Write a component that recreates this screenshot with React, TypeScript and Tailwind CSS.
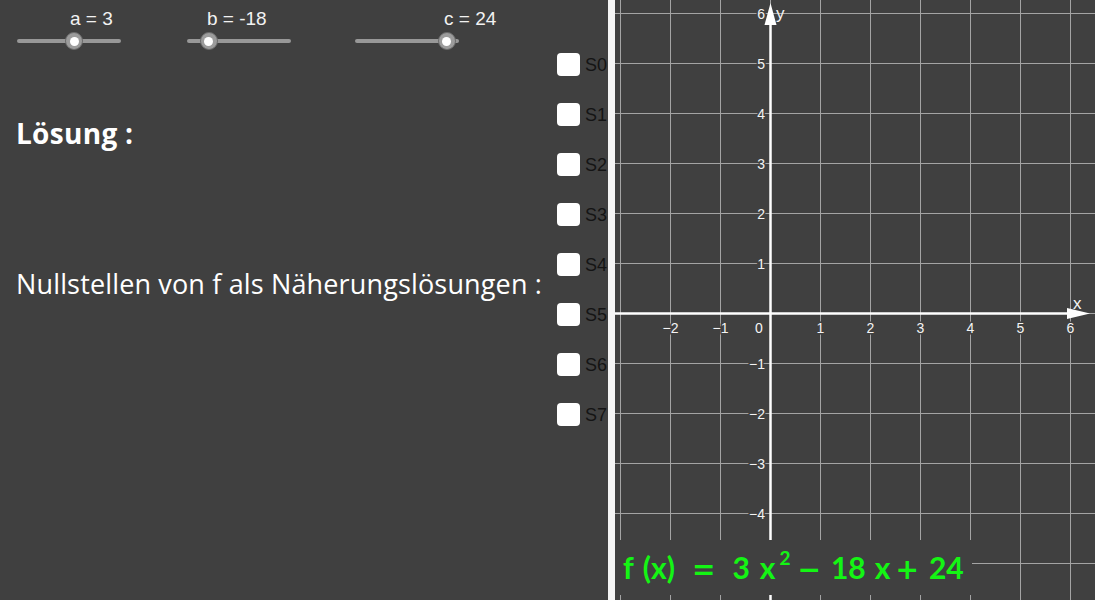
import React from 'react'

const BG = '#404040'

function Slider({ label, value, ml, labelPad }: { label: string; value: number; ml: string; labelPad: string }) {
  return (
    <div className={`${ml} flex flex-col pt-[8px]`}>
      <div className={`${labelPad} h-[22px] leading-[22px] text-[19px] text-[#f2f2f2] whitespace-nowrap`}>{label}</div>
      <div className="relative mt-[9px] w-[104px] h-[4px] rounded-full bg-[#989898]">
        <div
          className="absolute top-[-7px] w-[18px] h-[18px] rounded-full bg-[#9c9c9c] border border-[#6a6a6a] flex items-center justify-center"
          style={{ left: value * 104 - 9 }}
        >
          <div className="w-[9px] h-[9px] rounded-full bg-white" />
        </div>
      </div>
    </div>
  )
}

function CheckRow({ label }: { label: string }) {
  return (
    <div className="flex items-center h-[23px]">
      <div className="w-[23px] h-[23px] rounded-[4px] bg-white shrink-0" />
      <span className="ml-[5px] text-[18px] leading-none text-[#141414]">{label}</span>
    </div>
  )
}

function Graph() {
  const ox = 155.5
  const oy = 313.5
  const xs = [-3, -2, -1, 0, 1, 2, 3, 4, 5, 6]
  const ys = [6, 5, 4, 3, 2, 1, 0, -1, -2, -3, -4, -5]
  const tick = (n: number) => (n < 0 ? '\u2212' + Math.abs(n) : String(n))
  return (
    <svg className="absolute inset-0" width={480} height={600} viewBox="0 0 480 600">
      {xs.map((k) => (
        <line key={'vx' + k} x1={ox + 50 * k} y1={0} x2={ox + 50 * k} y2={600} stroke="#a4a4a4" strokeWidth={1} />
      ))}
      {ys.map((k) => (
        <line key={'hy' + k} x1={0} y1={oy - 50 * k} x2={480} y2={oy - 50 * k} stroke="#a4a4a4" strokeWidth={1} />
      ))}
      <line x1={0} y1={oy} x2={460} y2={oy} stroke="#fff" strokeWidth={2.5} />
      <polygon points={`452,${oy - 5.5} 475,${oy} 452,${oy + 5.5}`} fill="#fff" />
      <line x1={ox} y1={600} x2={ox} y2={20} stroke="#fff" strokeWidth={2.5} />
      <polygon points={`${ox - 6},25 ${ox},3 ${ox + 6},25`} fill="#fff" />
      <g fontFamily='"Liberation Sans", Arial, sans-serif' fontSize={14} fill="#f4f4f4" stroke={BG} strokeWidth={3} paintOrder="stroke">
        {xs.filter((k) => k !== 0 && k !== -3).map((k) => (
          <text key={'tx' + k} x={ox + 50 * k} y={333} textAnchor="middle">{tick(k)}</text>
        ))}
        <text x={144} y={333} textAnchor="middle">0</text>
        {ys.filter((k) => k !== 0 && k > -5).map((k) => (
          <text key={'ty' + k} x={150} y={oy - 50 * k + 5} textAnchor="end">{tick(k)}</text>
        ))}
      </g>
      <g fontFamily='"Liberation Sans", Arial, sans-serif' fontSize={17} fill="#f4f4f4">
        <text x={458} y={309}>x</text>
        <text x={161} y={19}>y</text>
      </g>
    </svg>
  )
}

export default function App() {
  return (
    <div className="w-[1095px] h-[600px] flex overflow-hidden font-['Liberation_Sans',Arial,sans-serif]" style={{ background: BG }}>
      {/* algebra / widgets side */}
      <div className="relative w-[608px] h-full flex overflow-hidden bg-[#404040]">
        <div className="w-[540px] shrink-0 flex flex-col">
          <div className="flex">
            <Slider label="a = 3" value={0.55} ml="ml-[17px]" labelPad="pl-[53px]" />
            <Slider label="b = -18" value={0.21} ml="ml-[66px]" labelPad="pl-[20px]" />
            <Slider label="c = 24" value={0.88} ml="ml-[64px]" labelPad="pl-[89px]" />
          </div>
          <div className="pl-[16px] mt-[75px] h-[30px] leading-[30px] text-[28px] font-bold tracking-[0.3px] text-white font-['Open_Sans',sans-serif] whitespace-nowrap">
            Lösung :
          </div>
          <div className="pl-[16px] mt-[121px] h-[30px] leading-[30px] text-[27px] tracking-[0.15px] text-white font-['Open_Sans',sans-serif] whitespace-nowrap">
            Nullstellen von f als Näherungslösungen :
          </div>
        </div>
        <div className="ml-[17px] pt-[53px] flex flex-col gap-[27px]">
          {['S0', 'S1', 'S2', 'S3', 'S4', 'S5', 'S6', 'S7'].map((s) => (
            <CheckRow key={s} label={s} />
          ))}
        </div>
      </div>

      <div className="w-[7px] h-full bg-[#f5f5f5] shrink-0" />

      {/* graphics view */}
      <div className="relative flex-1 h-full bg-[#404040] overflow-hidden">
        <Graph />
        <div className="absolute left-0 top-[540px] w-[357px] h-[55px] bg-[#404040] flex items-baseline pl-[8px] leading-[55px] text-[30px] font-bold text-[#14f514] font-['Lato',sans-serif] whitespace-nowrap">
          <span>f</span>
          <span className="ml-[9px]">(x)</span>
          <span className="ml-[17px] font-['DejaVu_Sans',sans-serif] text-[28px]">=</span>
          <span className="ml-[17px]">3</span>
          <span className="ml-[10px]">x</span>
          <span className="text-[19px] relative top-[-14px] ml-[4px]">2</span>
          <span className="ml-[7px] font-['DejaVu_Sans',sans-serif] text-[28px]">−</span>
          <span className="ml-[10px]">18</span>
          <span className="ml-[9px]">x</span>
          <span className="ml-[5px] font-['DejaVu_Sans',sans-serif] text-[28px]">+</span>
          <span className="ml-[10px]">24</span>
        </div>
      </div>
    </div>
  )
}
